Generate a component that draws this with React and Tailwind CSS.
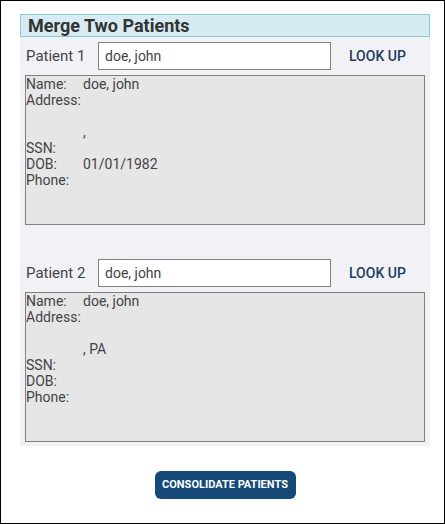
import React from "react";

function InfoBox({ name, cityState, dob }) {
  const rows = [
    ["Name:", name],
    ["Address:", ""],
    ["", ""],
    ["", cityState],
    ["SSN:", ""],
    ["DOB:", dob],
    ["Phone:", ""],
  ];
  return (
    <div className="mx-[5px] h-[150px] border border-[#808080] bg-[#e6e6e6] text-[14px] leading-[16px] text-[#444]">
      {rows.map(([label, value], i) => (
        <div key={i} className="flex h-[16px]">
          <span className="w-[57px] shrink-0">{label}</span>
          <span>{value}</span>
        </div>
      ))}
    </div>
  );
}

function PatientRow({ label, value }) {
  return (
    <div className="flex items-center h-[28px] pl-[6px]">
      <span className="w-[72px] text-[15px] text-[#444]">{label}</span>
      <input
        type="text"
        defaultValue={value}
        className="w-[233px] h-[28px] border border-[#808080] bg-white pl-[6px] text-[14px] text-[#444] outline-none"
      />
      <button className="ml-[18px] text-[14px] font-medium text-[#1d3e5f]">
        LOOK UP
      </button>
    </div>
  );
}

export default function App() {
  return (
    <div
      className="w-[445px] h-[524px] border border-black bg-white pl-[19px] pt-[13px]"
      style={{ fontFamily: "Roboto, 'Liberation Sans', sans-serif" }}
    >
      <div className="w-[410px] bg-[#f1f1f6] pb-[4px]">
        <div className="h-[23px] border border-[#8ec8dc] bg-[#d7ebf2] pl-[7px] text-[18px] font-bold leading-[21px] text-[#333]">
          Merge Two Patients
        </div>

        <div className="mt-[5px]">
          <PatientRow label="Patient 1" value="doe, john" />
        </div>
        <div className="mt-[5px]">
          <InfoBox name="doe, john" cityState="," dob="01/01/1982" />
        </div>

        <div className="mt-[34px]">
          <PatientRow label="Patient 2" value="doe, john" />
        </div>
        <div className="mt-[5px]">
          <InfoBox name="doe, john" cityState=", PA" dob="" />
        </div>
      </div>

      <div className="w-[410px] flex justify-center mt-[25px]">
        <button className="w-[141px] h-[28px] rounded-[6px] bg-[#154a78] text-[11px] font-bold text-white">
          CONSOLIDATE PATIENTS
        </button>
      </div>
    </div>
  );
}
